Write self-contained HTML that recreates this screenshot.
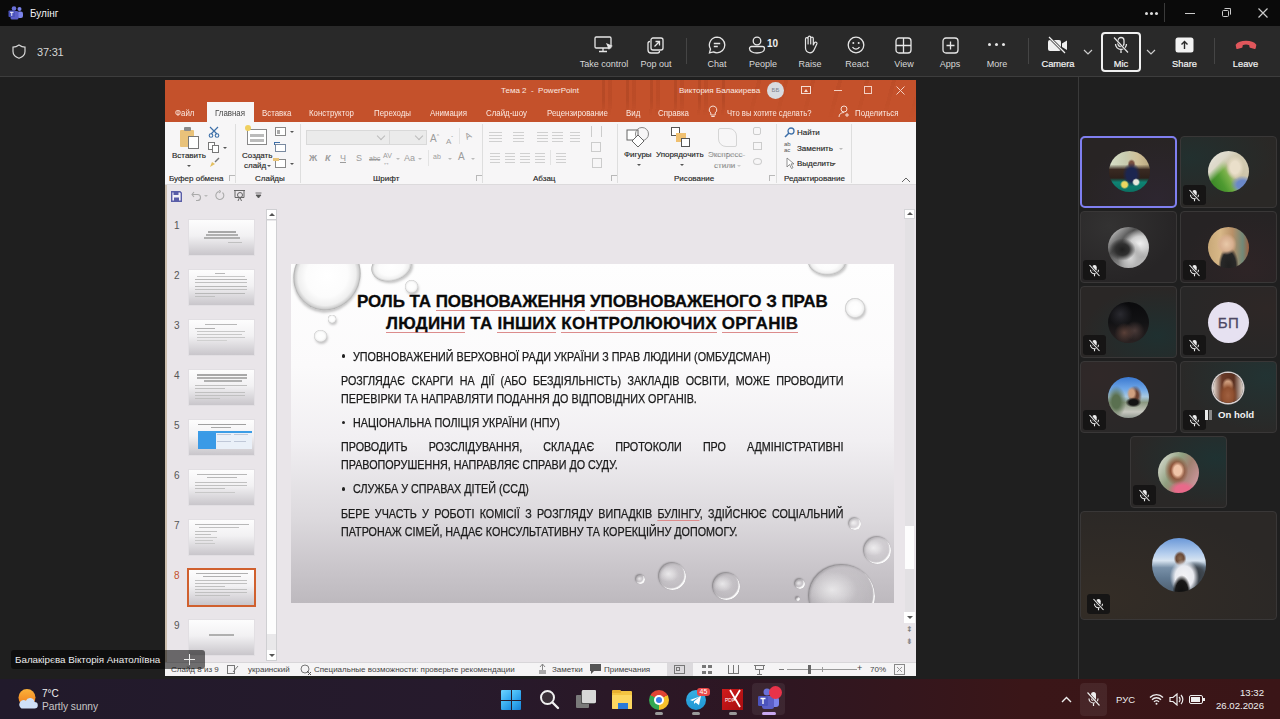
<!DOCTYPE html>
<html><head><meta charset="utf-8">
<style>
*{margin:0;padding:0;box-sizing:border-box}
html,body{width:1280px;height:719px;overflow:hidden;background:#1f1f1f;font-family:"Liberation Sans",sans-serif;-webkit-font-smoothing:antialiased}
.a{position:absolute}
.pt{font-size:8px;line-height:10px;white-space:nowrap}
.tab{top:28px;font-size:8.3px;line-height:10px;color:#fbe9e2;white-space:nowrap;transform:scaleX(.95);transform-origin:0 0}
.rl{font-size:8px;line-height:10px;color:#262626;white-space:nowrap;-webkit-text-stroke:0.15px #262626}
#titlebar{left:0;top:0;width:1280px;height:26px;background:#0a0a0a}
#toolbar{left:0;top:26px;width:1280px;height:50px;background:#292929}
#tbline{left:0;top:76px;width:1280px;height:1px;background:#3d3d3d}
#stage{left:0;top:77px;width:1280px;height:602px;background:#1f1f1f}
#ppt{left:165px;top:80px;width:751px;height:596px;background:#e9e5e9;overflow:hidden}
#vsep{left:1078px;top:77px;width:1px;height:602px;background:#3a3a3a}
#taskbar{left:0;top:679px;width:1280px;height:40px;background:linear-gradient(90deg,#211a2b 0%,#261a2c 35%,#2e1622 60%,#3a1618 80%,#3a1517 100%)}
.tri{width:0;height:0;border-left:2px solid transparent;border-right:2px solid transparent;border-top:2px solid #555}
.tri2{width:0;height:0;border-left:2px solid transparent;border-right:2px solid transparent;border-top:2px solid #bbb}
.launch{width:6px;height:6px;border-left:1px solid #aaa;border-top:1px solid #aaa;opacity:.8}
.vs{top:44px;width:1px;height:59px;background:#dedede}
.chev{width:6px;height:6px;border-right:1px solid #bbb;border-bottom:1px solid #bbb;transform:rotate(45deg)}
.dis{color:#9c9c9c;font-size:9px;line-height:10px;white-space:nowrap}
.b{font-weight:700}
.pg{height:10px;background:repeating-linear-gradient(180deg,#d0d0d0 0,#d0d0d0 1px,transparent 1px,transparent 3px)}
.thumb{width:65px;height:35px;background:linear-gradient(180deg,#fdfdfd 0%,#f2f1f3 45%,#c9c6cb 100%);box-shadow:0 0 0 1px #e2dfe3}
.thumb i{position:absolute;display:block}
.tri-up{width:0;height:0;border-left:3px solid transparent;border-right:3px solid transparent;border-bottom:3px solid #555}
.tri-dn{width:0;height:0;border-left:3px solid transparent;border-right:3px solid transparent;border-top:3px solid #555}
.st{top:585px;font-size:8px;line-height:10px;color:#444;white-space:nowrap}
.drop{border-radius:50%;background:radial-gradient(closest-side at 50% 50%,#ffffff 0%,#fcfcfc 62%,#efefef 86%,#d0d0d0 95%,#a8a8a8 100%);box-shadow:1px 2px 2.5px rgba(0,0,0,.22)}
.drop2{border-radius:50%;background:radial-gradient(ellipse 38% 30% at 35% 40%,rgba(255,255,255,.6),rgba(255,255,255,0) 100%),radial-gradient(circle at 50% 50%,rgba(255,255,255,.12) 0%,rgba(0,0,0,.04) 85%);box-shadow:-1px -1px 1.5px rgba(0,0,0,.3),inset -1.5px -1.5px 1px rgba(255,255,255,.95),inset 1px 1px 2px rgba(0,0,0,.12)}
.ttl{font-size:17px;font-weight:700;line-height:22px;color:#0a0a0a;-webkit-text-stroke:0.3px #0a0a0a;white-space:nowrap}
.ttl u,.bl u{text-decoration:none;background:linear-gradient(#dc8c8c,#dc8c8c) 0 100%/100% 1px no-repeat;padding-bottom:0}
.bl{font-size:12px;line-height:12px;color:#1a1a1a;-webkit-text-stroke:0.25px #1a1a1a;white-space:nowrap;transform:scaleX(.896);transform-origin:0 0}
.bl.j{width:560.8px;text-align:justify;text-align-last:justify}
.lb{top:59px;font-size:9px;line-height:11px;color:#d8d8d8;text-align:center;white-space:nowrap}
.lbb{top:59px;font-size:9.3px;line-height:11px;color:#f4f4f4;font-weight:400;-webkit-text-stroke:0.2px #f4f4f4;text-align:center;white-space:nowrap}
.tile{width:97px;height:72px;border:1px solid #393737;border-radius:4px;background:#2a2827}
.av{width:41px;height:41px;border-radius:50%}
.mb{width:23px;height:20px;border-radius:3px;background:#161515}
.dot{width:3.6px;height:3.6px;border-radius:50%;background:#222}
</style></head><body>
<div id="titlebar" class="a"></div>
<div id="toolbar" class="a"></div>
<div id="tbline" class="a"></div>
<div id="stage" class="a"></div>
<div id="taskbar" class="a"></div>
<div id="vsep" class="a"></div>

<!-- title bar -->
<svg class="a" style="left:8px;top:6px" width="16" height="14" viewBox="0 0 16 14">
 <circle cx="11.5" cy="3" r="2" fill="#7b83eb"/><rect x="9" y="5.5" width="6" height="6.5" rx="2" fill="#7b83eb"/>
 <circle cx="6" cy="2.5" r="2.3" fill="#6a70d8"/><rect x="2.5" y="5" width="8" height="8.5" rx="1.5" fill="#5b5fc7"/>
 <rect x="0.5" y="4.5" width="6.5" height="6.5" rx="0.8" fill="#4b53bc"/><path d="M2 6.3h3.5M3.75 6.3v3.6" stroke="#fff" stroke-width="0.9"/>
</svg>
<div class="a" style="left:30px;top:8px;font-size:10px;line-height:12px;color:#f2f2f2">Булінг</div>
<div class="a" style="left:1145px;top:12px;width:3px;height:3px;border-radius:50%;background:#ddd;box-shadow:5px 0 0 #ddd,10px 0 0 #ddd"></div>
<div class="a" style="left:1164px;top:3px;width:1px;height:19px;background:#3a3a3a"></div>
<div class="a" style="left:1185px;top:12.5px;width:10px;height:1.3px;background:#ccc"></div>
<div class="a" style="left:1222px;top:10px;width:7px;height:7px;border:1.2px solid #ccc;border-radius:1.5px"></div>
<div class="a" style="left:1224px;top:8px;width:7px;height:7px;border-top:1.2px solid #ccc;border-right:1.2px solid #ccc;border-radius:1.5px"></div>
<svg class="a" style="left:1258px;top:8px" width="10" height="10" viewBox="0 0 10 10"><path d="M0.5 0.5l9 9M9.5 0.5l-9 9" stroke="#ccc" stroke-width="1.2"/></svg>
<!-- toolbar left -->
<svg class="a" style="left:12px;top:44px" width="14" height="15" viewBox="0 0 14 15"><path d="M7 1C5 2.5 3 3.2 1 3.2v4.3c0 3.3 2.3 5.5 6 6.8 3.7-1.3 6-3.5 6-6.8V3.2C11 3.2 9 2.5 7 1z" fill="none" stroke="#d8d8d8" stroke-width="1.2"/></svg>
<div class="a" style="left:37px;top:45px;font-size:11px;line-height:14px;color:#d6d6d6;letter-spacing:-0.2px">37:31</div>
<!-- toolbar buttons -->
<svg class="a ic" style="left:594px;top:36px" width="20" height="18" viewBox="0 0 20 18"><rect x="1" y="1" width="16" height="11" rx="1.2" fill="none" stroke="#e6e6e6" stroke-width="1.3"/><path d="M9 12v3M5 15.5h8" stroke="#e6e6e6" stroke-width="1.3"/><path d="M12 7l7 3-3 1-1 3z" fill="#e6e6e6"/></svg>
<div class="a lb" style="left:579px;width:50px">Take control</div>
<svg class="a ic" style="left:647px;top:37px" width="17" height="17" viewBox="0 0 17 17"><rect x="4" y="1" width="12" height="12" rx="2" fill="none" stroke="#e6e6e6" stroke-width="1.3"/><path d="M3 4.5A2 2 0 0 0 1 6.5V13a3 3 0 0 0 3 3h6.5a2 2 0 0 0 2-2" fill="none" stroke="#e6e6e6" stroke-width="1.3"/><path d="M7.5 9.5l5-5M8.5 4.5h4v4" fill="none" stroke="#e6e6e6" stroke-width="1.3"/></svg>
<div class="a lb" style="left:639px;width:34px">Pop out</div>
<div class="a" style="left:686px;top:38px;width:1px;height:26px;background:#454545"></div>
<svg class="a ic" style="left:708px;top:36px" width="18" height="18" viewBox="0 0 18 18"><path d="M9 1.2a7.8 7.8 0 0 1 0 15.6c-1.3 0-2.5-.3-3.5-.9L1.5 16.8l1-3.8A7.8 7.8 0 0 1 9 1.2z" fill="none" stroke="#e6e6e6" stroke-width="1.3"/><path d="M5.8 7.5h6.4M5.8 10.5h4" stroke="#e6e6e6" stroke-width="1.3"/></svg>
<div class="a lb" style="left:702px;width:30px">Chat</div>
<svg class="a ic" style="left:748px;top:36px" width="18" height="18" viewBox="0 0 18 18"><circle cx="9" cy="5" r="3.8" fill="none" stroke="#e6e6e6" stroke-width="1.3"/><path d="M3.5 10.5h11a2 2 0 0 1 2 2c0 2.5-3 4.5-7.5 4.5S1.5 15 1.5 12.5a2 2 0 0 1 2-2z" fill="none" stroke="#e6e6e6" stroke-width="1.3"/></svg>
<div class="a" style="left:767px;top:38px;font-size:10px;line-height:12px;font-weight:700;color:#eee">10</div>
<div class="a lb" style="left:748px;width:30px">People</div>
<svg class="a ic" style="left:801px;top:35px" width="17" height="19" viewBox="0 0 17 19"><path d="M4.5 11V4a1.3 1.3 0 0 1 2.6 0v5V2.5a1.3 1.3 0 0 1 2.6 0V9V3.5a1.3 1.3 0 0 1 2.6 0V10l1.2-2.2a1.3 1.3 0 0 1 2.3 1.2l-2.8 6A4.5 4.5 0 0 1 9 17.8 5 5 0 0 1 4.5 13z" fill="none" stroke="#e6e6e6" stroke-width="1.2" stroke-linejoin="round"/></svg>
<div class="a lb" style="left:795px;width:30px">Raise</div>
<svg class="a ic" style="left:847px;top:36px" width="18" height="18" viewBox="0 0 18 18"><circle cx="9" cy="9" r="7.8" fill="none" stroke="#e6e6e6" stroke-width="1.3"/><circle cx="6.3" cy="7" r="1" fill="#e6e6e6"/><circle cx="11.7" cy="7" r="1" fill="#e6e6e6"/><path d="M5.5 11a4 4 0 0 0 7 0" fill="none" stroke="#e6e6e6" stroke-width="1.3"/></svg>
<div class="a lb" style="left:842px;width:30px">React</div>
<svg class="a ic" style="left:895px;top:37px" width="17" height="17" viewBox="0 0 17 17"><rect x="1" y="1" width="15" height="15" rx="3" fill="none" stroke="#e6e6e6" stroke-width="1.3"/><path d="M8.5 1v15M1 8.5h15" stroke="#e6e6e6" stroke-width="1.3"/></svg>
<div class="a lb" style="left:889px;width:30px">View</div>
<svg class="a ic" style="left:942px;top:37px" width="17" height="17" viewBox="0 0 17 17"><rect x="1" y="1" width="15" height="15" rx="3" fill="none" stroke="#e6e6e6" stroke-width="1.3"/><path d="M8.5 4.5v8M4.5 8.5h8" stroke="#e6e6e6" stroke-width="1.3"/></svg>
<div class="a lb" style="left:935px;width:30px">Apps</div>
<div class="a" style="left:988px;top:43px;width:3px;height:3px;border-radius:50%;background:#e6e6e6;box-shadow:7px 0 0 #e6e6e6,14px 0 0 #e6e6e6"></div>
<div class="a lb" style="left:982px;width:30px">More</div>
<div class="a" style="left:1028px;top:38px;width:1px;height:26px;background:#454545"></div>
<svg class="a ic" style="left:1047px;top:36px" width="22" height="18" viewBox="0 0 22 18"><rect x="1" y="4" width="13" height="11" rx="2" fill="#f0f0f0"/><path d="M15 7.5l5-3v9.5l-5-3z" fill="#f0f0f0"/><path d="M2 1l16 16" stroke="#292929" stroke-width="2.6"/><path d="M2 1l16 16" stroke="#f0f0f0" stroke-width="1.2"/></svg>
<div class="a lbb" style="left:1038px;width:40px">Camera</div>
<svg class="a" style="left:1083px;top:49px" width="10" height="6" viewBox="0 0 10 6"><path d="M1 1l4 4 4-4" fill="none" stroke="#ccc" stroke-width="1.2"/></svg>
<div class="a" style="left:1101px;top:32px;width:40px;height:40px;border:2px solid #f0f0f0;border-radius:4px"></div>
<svg class="a ic" style="left:1112px;top:36px" width="18" height="18" viewBox="0 0 18 18"><rect x="6" y="1.5" width="6" height="9" rx="3" fill="none" stroke="#e6e6e6" stroke-width="1.3"/><path d="M3.5 8a5.5 5.5 0 0 0 11 0M9 13.5V17" fill="none" stroke="#e6e6e6" stroke-width="1.3"/><path d="M2 1.5l14 15" stroke="#292929" stroke-width="2.4"/><path d="M2 1.5l14 15" stroke="#e6e6e6" stroke-width="1.2"/></svg>
<div class="a lbb" style="left:1106px;width:30px">Mic</div>
<svg class="a" style="left:1146px;top:49px" width="10" height="6" viewBox="0 0 10 6"><path d="M1 1l4 4 4-4" fill="none" stroke="#ccc" stroke-width="1.2"/></svg>
<svg class="a ic" style="left:1175px;top:37px" width="19" height="16" viewBox="0 0 19 16"><rect x="0.5" y="0.5" width="18" height="15" rx="2.5" fill="#f2f2f2"/><path d="M9.5 12V4.5M6.5 7.5l3-3 3 3" fill="none" stroke="#292929" stroke-width="1.4"/></svg>
<div class="a lbb" style="left:1169px;width:31px">Share</div>
<div class="a" style="left:1214px;top:38px;width:1px;height:26px;background:#454545"></div>
<svg class="a ic" style="left:1235px;top:39px" width="22" height="11" viewBox="0 0 22 11"><path d="M1.5 6C5 1.5 17 1.5 20.5 6l-.6 3.2-4.6-1.2-.4-2.6C13 4.6 9 4.6 7.1 5.4l-.4 2.6-4.6 1.2z" fill="#e0575c" stroke="#e0575c" stroke-width="1.6" stroke-linejoin="round"/></svg>
<div class="a lbb" style="left:1230px;width:31px">Leave</div>
<!-- name label overlay -->

<div id="ppt" class="a">
 <!-- title + tabs orange -->
 <div class="a" style="left:0;top:0;width:751px;height:42px;background:#c4512b"></div>
 <div class="a" style="left:430px;top:0;width:130px;height:42px;background:repeating-linear-gradient(91deg,rgba(110,35,12,0) 0 7px,rgba(110,35,12,.16) 7px 10px,rgba(110,35,12,0) 10px 13px,rgba(110,35,12,.1) 13px 17px,rgba(110,35,12,0) 17px 24px);-webkit-mask-image:linear-gradient(180deg,#000 0%,#000 45%,transparent 85%)"></div>
 <div class="a" style="left:580px;top:0;width:170px;height:42px;background:repeating-linear-gradient(105deg,rgba(110,35,12,0) 0 12px,rgba(110,35,12,.08) 12px 16px,rgba(110,35,12,0) 16px 26px);-webkit-mask-image:linear-gradient(180deg,#000 0%,transparent 90%)"></div>
 <div class="a pt" style="left:336px;top:6px;color:#fbe9e2">Тема 2 &nbsp;- &nbsp;PowerPoint</div>
 <div class="a pt" style="left:514px;top:6px;color:#fbe9e2">Виктория Балакирева</div>
 <div class="a" style="left:602px;top:2px;width:17px;height:17px;border-radius:50%;background:#d8dbe0;color:#7a7f8c;font-size:6px;line-height:17px;text-align:center">ББ</div>
 <div class="a" style="left:636px;top:6px;width:10px;height:8px;border:1px solid #f6ddd3"></div>
 <div class="a" style="left:639px;top:9px;width:0;height:0;border-left:2px solid transparent;border-right:2px solid transparent;border-bottom:3px solid #f6ddd3"></div>
 <div class="a" style="left:669px;top:10px;width:8px;height:1px;background:#f3d0c3"></div>
 <div class="a" style="left:699px;top:6px;width:8px;height:8px;border:1px solid #f3d0c3"></div>
 <svg class="a" style="left:731px;top:6px" width="9" height="9" viewBox="0 0 9 9"><path d="M.5.5l8 8M8.5.5l-8 8" stroke="#f3d0c3" stroke-width="1"/></svg>
 <div class="a" style="left:42px;top:22px;width:47px;height:20px;background:#f7f6f7"></div>
 <div class="a tab" style="left:10px">Файл</div>
 <div class="a tab" style="left:50px;color:#444">Главная</div>
 <div class="a tab" style="left:97px">Вставка</div>
 <div class="a tab" style="left:144px">Конструктор</div>
 <div class="a tab" style="left:209px">Переходы</div>
 <div class="a tab" style="left:265px">Анимация</div>
 <div class="a tab" style="left:321px">Слайд-шоу</div>
 <div class="a tab" style="left:382px">Рецензирование</div>
 <div class="a tab" style="left:461px">Вид</div>
 <div class="a tab" style="left:493px">Справка</div>
 <svg class="a" style="left:543px;top:25px" width="10" height="13" viewBox="0 0 10 13"><path d="M5 1a3.8 3.8 0 0 0-2.2 6.9v2.1h4.4V7.9A3.8 3.8 0 0 0 5 1zM3.3 11.5h3.4" fill="none" stroke="#f6ddd3" stroke-width="1"/></svg>
 <div class="a tab" style="left:562px;transform:scaleX(.92)">Что вы хотите сделать?</div>
 <svg class="a" style="left:673px;top:25px" width="13" height="13" viewBox="0 0 13 13"><circle cx="6" cy="4" r="3" fill="none" stroke="#f6ddd3"/><path d="M1 12c0-3 2.2-4.5 5-4.5M9 8v4M7 10h4" fill="none" stroke="#f6ddd3"/></svg>
 <div class="a tab" style="left:690px">Поделиться</div>

 <!-- ribbon -->
 <div id="ribbon" class="a" style="left:0;top:42px;width:751px;height:63px;background:#f7f6f7"></div>
 <div class="a" style="left:0;top:104px;width:751px;height:1px;background:#dcdadc"></div>

 <!-- Clipboard group -->
 <div class="a" style="left:15px;top:50px;width:14px;height:17px;background:#e9c27a;border-radius:1px"></div>
 <div class="a" style="left:19px;top:47px;width:7px;height:4px;background:#8a8a8a;border-radius:1px"></div>
 <div class="a" style="left:23px;top:56px;width:11px;height:13px;background:#fff;border:1px solid #777"></div>
 <div class="a rl" style="left:7px;top:71px">Вставить</div>
 <div class="a tri" style="left:22px;top:85px"></div>
 <svg class="a" style="left:43px;top:46px" width="12" height="12" viewBox="0 0 12 12"><path d="M2 1l7 7M10 1L3 8" stroke="#3d6fa8" stroke-width="1.2" fill="none"/><circle cx="3" cy="9.5" r="1.8" fill="none" stroke="#3d6fa8" stroke-width="1.1"/><circle cx="9" cy="9.5" r="1.8" fill="none" stroke="#3d6fa8" stroke-width="1.1"/></svg>
 <svg class="a" style="left:43px;top:62px" width="12" height="11" viewBox="0 0 12 11"><rect x="0.5" y="0.5" width="6" height="7" fill="#fff" stroke="#777"/><rect x="4.5" y="3.5" width="6" height="7" fill="#fff" stroke="#777"/></svg>
 <div class="a tri" style="left:58px;top:67px"></div>
 <svg class="a" style="left:44px;top:77px" width="11" height="11" viewBox="0 0 11 11"><path d="M6 5l4-4" stroke="#777" stroke-width="1.5"/><path d="M1 10l2-5 3 2z" fill="#e4c060"/></svg>
 <div class="a rl" style="left:4px;top:94px">Буфер обмена</div>
 <div class="a launch" style="left:64px;top:95px"></div>
 <div class="a vs" style="left:70px"></div>
 <!-- Slides group -->
 <div class="a" style="left:82px;top:49px;width:20px;height:16px;background:#fff;border:1px solid #888"></div>
 <div class="a" style="left:85px;top:54px;width:14px;height:3px;background:#bbb"></div>
 <div class="a" style="left:85px;top:59px;width:14px;height:3px;background:#bbb"></div>
 <div class="a" style="left:80px;top:45px;width:6px;height:6px;background:#f0d060;border-radius:50%"></div>
 <div class="a rl" style="left:77px;top:71px">Создать</div>
 <div class="a rl" style="left:79px;top:81px">слайд</div>
 <div class="a tri" style="left:102px;top:85px"></div>
 <div class="a" style="left:110px;top:47px;width:11px;height:9px;border:1px solid #888;background:#fff"></div>
 <div class="a" style="left:112px;top:50px;width:3px;height:4px;background:#aaa"></div>
 <div class="a tri" style="left:125px;top:51px"></div>
 <div class="a" style="left:110px;top:64px;width:11px;height:8px;border:1px solid #7a8aa0;background:#fff"></div>
 <div class="a" style="left:109px;top:62px;width:6px;height:3px;border-top:1.5px solid #3d6fa8;border-left:1.5px solid #3d6fa8"></div>
 <div class="a" style="left:110px;top:79px;width:11px;height:9px;border:1px solid #888;background:#fff"></div>
 <div class="a" style="left:108px;top:78px;width:6px;height:3px;background:#e8c47a"></div>
 <div class="a tri" style="left:125px;top:83px"></div>
 <div class="a rl" style="left:90px;top:94px">Слайды</div>
 <div class="a vs" style="left:135px"></div>
 <!-- Font group -->
 <div class="a" style="left:141px;top:50px;width:84px;height:15px;background:#ebebeb;border:1px solid #d9d9d9"></div>
 <div class="a" style="left:224px;top:50px;width:38px;height:15px;background:#ebebeb;border:1px solid #d9d9d9"></div>
 <div class="a chev" style="left:213px;top:53px"></div>
 <div class="a chev" style="left:251px;top:53px"></div>
 <div class="a dis" style="left:265px;top:51px;font-size:10px">A<sup style="font-size:5px">^</sup></div>
 <div class="a dis" style="left:281px;top:53px;font-size:8px">A<sup style="font-size:5px">ˇ</sup></div>
 <div class="a" style="left:294px;top:48px;width:1px;height:16px;background:#e3e3e3"></div>
 <div class="a dis" style="left:300px;top:51px;font-size:9px;transform:rotate(-30deg)">A</div>
 <div class="a dis b" style="left:144px;top:73px">Ж</div>
 <div class="a dis b" style="left:160px;top:73px;font-style:italic">К</div>
 <div class="a dis" style="left:175px;top:73px;text-decoration:underline">Ч</div>
 <div class="a dis" style="left:191px;top:73px">S</div>
 <div class="a dis" style="left:204px;top:74px;font-size:7px;text-decoration:line-through">abc</div>
 <div class="a dis" style="left:218px;top:72px;font-size:7px;line-height:7px">AV<br>↔</div>
 <div class="a tri2" style="left:231px;top:78px"></div>
 <div class="a dis" style="left:239px;top:73px">Aa</div>
 <div class="a tri2" style="left:253px;top:78px"></div>
 <div class="a" style="left:263px;top:70px;width:1px;height:16px;background:#e3e3e3"></div>
 <div class="a dis" style="left:268px;top:72px;font-size:7px">ab</div>
 <div class="a tri2" style="left:283px;top:78px"></div>
 <div class="a dis" style="left:293px;top:72px;font-size:10px">A</div>
 <div class="a tri2" style="left:306px;top:78px"></div>
 <div class="a rl" style="left:208px;top:94px">Шрифт</div>
 <div class="a launch" style="left:311px;top:95px"></div>
 <div class="a vs" style="left:317px"></div>
 <!-- Paragraph group (disabled) -->
 <div class="a pg" style="left:324px;top:52px;width:13px"></div>
 <div class="a pg" style="left:348px;top:52px;width:11px"></div>
 <div class="a pg" style="left:372px;top:52px;width:11px"></div>
 <div class="a pg" style="left:387px;top:52px;width:11px"></div>
 <div class="a pg" style="left:405px;top:52px;width:10px"></div>
 <div class="a pg" style="left:325px;top:73px;width:10px"></div>
 <div class="a pg" style="left:340px;top:73px;width:10px"></div>
 <div class="a pg" style="left:355px;top:73px;width:10px"></div>
 <div class="a pg" style="left:370px;top:73px;width:10px"></div>
 <div class="a" style="left:385px;top:70px;width:1px;height:15px;background:#e3e3e3"></div>
 <div class="a pg" style="left:391px;top:73px;width:10px"></div>
 <div class="a" style="left:426px;top:46px;width:11px;height:11px;border-left:1px solid #ccc;border-right:1px solid #ccc"></div>
 <div class="a" style="left:426px;top:62px;width:10px;height:10px;border:1px solid #ccc"></div>
 <div class="a" style="left:427px;top:78px;width:10px;height:10px;border:1px solid #ccc"></div>
 <div class="a rl" style="left:368px;top:94px">Абзац</div>
 <div class="a launch" style="left:446px;top:95px"></div>
 <div class="a vs" style="left:452px"></div>
 <!-- Drawing group -->
 <svg class="a" style="left:461px;top:46px" width="24" height="22" viewBox="0 0 24 22"><rect x="1" y="4" width="11" height="10" fill="#fff" stroke="#666"/><circle cx="16" cy="8" r="6.5" fill="none" stroke="#888"/><path d="M12 9l6 6-6 6-6-6z" fill="#fff" stroke="#666"/></svg>
 <div class="a rl" style="left:459px;top:70px">Фигуры</div>
 <div class="a tri" style="left:472px;top:84px"></div>
 <div class="a" style="left:506px;top:47px;width:9px;height:9px;background:#fff;border:1px solid #555"></div>
 <div class="a" style="left:511px;top:53px;width:10px;height:9px;background:#f0c070"></div>
 <div class="a" style="left:516px;top:58px;width:9px;height:9px;background:#fff;border:1px solid #555"></div>
 <div class="a rl" style="left:491px;top:70px">Упорядочить</div>
 <div class="a tri" style="left:515px;top:84px"></div>
 <div class="a" style="left:553px;top:48px;width:19px;height:19px;border:1px solid #d5d5d5;border-radius:2px 8px 2px 8px"></div>
 <div class="a rl" style="left:543px;top:70px;color:#c0c0c0">Экспресс-</div>
 <div class="a rl" style="left:549px;top:81px;color:#c0c0c0">стили</div>
 <div class="a tri2" style="left:572px;top:85px;border-top-color:#ccc"></div>
 <div class="a" style="left:588px;top:47px;width:8px;height:8px;border:1px solid #ccc;border-radius:2px"></div>
 <div class="a" style="left:588px;top:62px;width:9px;height:8px;border:1px solid #ccc"></div>
 <div class="a" style="left:588px;top:78px;width:9px;height:7px;border:1px solid #ccc;border-radius:50%"></div>
 <div class="a rl" style="left:509px;top:94px">Рисование</div>
 <div class="a launch" style="left:604px;top:95px"></div>
 <div class="a vs" style="left:611px"></div>
 <!-- Editing group -->
 <svg class="a" style="left:619px;top:47px" width="11" height="11" viewBox="0 0 11 11"><circle cx="7" cy="4" r="3" fill="none" stroke="#3d6fa8" stroke-width="1.3"/><path d="M5 6l-4 4" stroke="#3d6fa8" stroke-width="1.6"/></svg>
 <div class="a rl" style="left:632px;top:48px">Найти</div>
 <div class="a" style="left:619px;top:61px;font-size:6px;line-height:6px;color:#555">ab<br>ac</div>
 <div class="a rl" style="left:632px;top:64px">Заменить</div>
 <div class="a tri2" style="left:674px;top:68px"></div>
 <svg class="a" style="left:621px;top:77px" width="9" height="12" viewBox="0 0 9 12"><path d="M1 1v9l2.5-2.5 2 4 1.5-.8-2-3.8H8z" fill="#fff" stroke="#777" stroke-width="0.8"/></svg>
 <div class="a rl" style="left:632px;top:79px">Выделить</div>
 <div class="a tri" style="left:667px;top:83px"></div>
 <div class="a rl" style="left:619px;top:94px">Редактирование</div>
 <div class="a vs" style="left:686px"></div>
 <svg class="a" style="left:736px;top:97px" width="10" height="6" viewBox="0 0 10 6"><path d="M1 5l4-4 4 4" fill="none" stroke="#666"/></svg>
 <!-- QAT -->
 <svg class="a" style="left:6px;top:111px" width="11" height="11" viewBox="0 0 11 11"><path d="M0.7 0.7h8.3l1.3 1.3v8.3H0.7z" fill="#f4f2f8" stroke="#5a5ea8" stroke-width="1.4"/><rect x="2.5" y="1" width="5" height="3" fill="#5a5ea8"/><rect x="3" y="6.5" width="5" height="3.5" fill="#5a5ea8"/></svg>
 <svg class="a" style="left:26px;top:111px" width="11" height="10" viewBox="0 0 11 10"><path d="M3 1L1 3.5 3 6M1 3.5h5.5a3 3 0 0 1 0 6H5" fill="none" stroke="#aaa" stroke-width="1.1"/></svg>
 <div class="a tri2" style="left:39px;top:115px;border-top-color:#bbb"></div>
 <svg class="a" style="left:49px;top:110px" width="11" height="11" viewBox="0 0 11 11"><path d="M8.5 2.5A4 4 0 1 1 5.5 1.5" fill="none" stroke="#aaa" stroke-width="1.1"/><path d="M5 0l2 1.5-2 1.5" fill="none" stroke="#aaa"/></svg>
 <svg class="a" style="left:68px;top:109px" width="13" height="13" viewBox="0 0 13 13"><path d="M1 1.5h11" stroke="#666"/><path d="M2 1.5v7h9v-7" fill="none" stroke="#666"/><circle cx="7" cy="6" r="2.5" fill="none" stroke="#666"/><path d="M5 12l1.5-3.5M8.5 12L7 8.5" stroke="#666"/></svg>
 <svg class="a" style="left:90px;top:112px" width="7" height="7" viewBox="0 0 7 7"><path d="M0.5 1h6M1 3l2.5 3 2.5-3z" fill="#555" stroke="#555" stroke-width="0.8"/></svg>

 <!-- left thumbnails panel -->
 <div class="a" style="left:0;top:105px;width:2px;height:477px;background:#cdbfae"></div>
 <div class="a" style="left:9px;top:140px;font-size:10px;line-height:12px;color:#555">1</div>
 <div class="a thumb" style="left:24px;top:140px"><i style="left:19px;top:11px;width:28px;height:1.5px;background:#a8a8a8"></i><i style="left:17px;top:14px;width:32px;height:1.5px;background:#b0b0b0"></i><i style="left:15px;top:17px;width:36px;height:1.5px;background:#b0b0b0"></i><i style="left:39px;top:22px;width:14px;height:1px;background:#c0c0c0"></i></div>
 <div class="a" style="left:9px;top:190px;font-size:10px;line-height:12px;color:#555">2</div>
 <div class="a thumb" style="left:24px;top:190px"><i style="left:26px;top:3px;width:10px;height:1px;background:#b8b8b8"></i><i style="left:8px;top:6px;width:48px;height:1px;background:#c8c8c8"></i><i style="left:6px;top:9px;width:52px;height:1.2px;background:#b8b8b8"></i><i style="left:6px;top:12px;width:52px;height:1px;background:#c0c0c0"></i><i style="left:6px;top:16px;width:52px;height:1.2px;background:#b8b8b8"></i><i style="left:6px;top:19px;width:52px;height:1px;background:#c0c0c0"></i><i style="left:6px;top:23px;width:50px;height:1.2px;background:#b8b8b8"></i><i style="left:6px;top:26px;width:20px;height:1px;background:#c0c0c0"></i></div>
 <div class="a" style="left:9px;top:240px;font-size:10px;line-height:12px;color:#555">3</div>
 <div class="a thumb" style="left:24px;top:240px"><i style="left:16px;top:4px;width:32px;height:1px;background:#b8b8b8"></i><i style="left:6px;top:8px;width:20px;height:1.2px;background:#b0b0b0"></i><i style="left:8px;top:11px;width:48px;height:1px;background:#c8c8c8"></i><i style="left:8px;top:14px;width:45px;height:1px;background:#c8c8c8"></i><i style="left:8px;top:17px;width:48px;height:1px;background:#c8c8c8"></i><i style="left:8px;top:20px;width:30px;height:1px;background:#d0d0d0"></i></div>
 <div class="a" style="left:9px;top:290px;font-size:10px;line-height:12px;color:#555">4</div>
 <div class="a thumb" style="left:24px;top:290px"><i style="left:8px;top:4px;width:50px;height:1.5px;background:#a8a8a8"></i><i style="left:8px;top:7px;width:50px;height:1.5px;background:#b0b0b0"></i><i style="left:15px;top:10px;width:38px;height:1.5px;background:#b0b0b0"></i><i style="left:6px;top:15px;width:52px;height:1px;background:#c0c0c0"></i><i style="left:6px;top:18px;width:30px;height:1px;background:#c0c0c0"></i><i style="left:6px;top:22px;width:50px;height:1px;background:#c0c0c0"></i><i style="left:6px;top:25px;width:50px;height:1px;background:#c0c0c0"></i><i style="left:6px;top:28px;width:25px;height:1px;background:#c0c0c0"></i></div>
 <div class="a" style="left:9px;top:340px;font-size:10px;line-height:12px;color:#555">5</div>
 <div class="a thumb" style="left:24px;top:340px"><i style="left:9px;top:4px;width:48px;height:1.3px;background:#a0a0a0"></i><i style="left:22px;top:6.5px;width:20px;height:1.2px;background:#a8a8a8"></i><i style="left:9px;top:10.5px;width:54px;height:2px;background:#3c9de6"></i><i style="left:9px;top:12.5px;width:18px;height:16px;background:#3a9ae6"></i><i style="left:27px;top:12.5px;width:36px;height:16px;background:#eaf0f8"></i><i style="left:28px;top:14px;width:14px;height:0.8px;background:#c0c8d8"></i><i style="left:45px;top:14px;width:14px;height:0.8px;background:#c0c8d8"></i><i style="left:28px;top:21px;width:14px;height:0.8px;background:#c0c8d8"></i><i style="left:45px;top:21px;width:12px;height:0.8px;background:#c0c8d8"></i></div>
 <div class="a" style="left:9px;top:390px;font-size:10px;line-height:12px;color:#555">6</div>
 <div class="a thumb" style="left:24px;top:390px"><i style="left:8px;top:4px;width:50px;height:1.2px;background:#b8b8b8"></i><i style="left:18px;top:7px;width:30px;height:1.2px;background:#b8b8b8"></i><i style="left:6px;top:12px;width:52px;height:1px;background:#c0c0c0"></i><i style="left:6px;top:15px;width:52px;height:1px;background:#c0c0c0"></i><i style="left:6px;top:18px;width:30px;height:1px;background:#c0c0c0"></i><i style="left:6px;top:22px;width:40px;height:1px;background:#c8c8c8"></i></div>
 <div class="a" style="left:9px;top:440px;font-size:10px;line-height:12px;color:#555">7</div>
 <div class="a thumb" style="left:24px;top:440px"><i style="left:6px;top:4px;width:54px;height:1.2px;background:#b8b8b8"></i><i style="left:10px;top:7px;width:40px;height:1px;background:#c0c0c0"></i><i style="left:6px;top:11px;width:22px;height:1px;background:#c0c0c0"></i><i style="left:6px;top:14px;width:16px;height:1px;background:#c0c0c0"></i><i style="left:6px;top:17px;width:22px;height:1px;background:#c8c8c8"></i><i style="left:6px;top:20px;width:18px;height:1px;background:#c8c8c8"></i><i style="left:6px;top:23px;width:20px;height:1px;background:#c8c8c8"></i></div>
 <div class="a" style="left:9px;top:490px;font-size:10px;line-height:12px;color:#c4512b">8</div>
 <div class="a thumb" style="left:24px;top:490px"><i style="left:7px;top:3px;width:52px;height:1.2px;background:#b0b0b0"></i><i style="left:14px;top:6px;width:38px;height:1.2px;background:#b0b0b0"></i><i style="left:6px;top:10px;width:52px;height:1px;background:#c0c0c0"></i><i style="left:6px;top:13px;width:52px;height:1px;background:#c0c0c0"></i><i style="left:6px;top:16px;width:30px;height:1px;background:#c0c0c0"></i><i style="left:6px;top:19px;width:52px;height:1px;background:#c0c0c0"></i><i style="left:6px;top:22px;width:52px;height:1px;background:#c0c0c0"></i><i style="left:6px;top:25px;width:35px;height:1px;background:#c0c0c0"></i></div>
 <div class="a" style="left:22px;top:488px;width:69px;height:39px;border:2px solid #d0602e"></div>
 <div class="a" style="left:9px;top:540px;font-size:10px;line-height:12px;color:#555">9</div>
 <div class="a thumb" style="left:24px;top:540px"><i style="left:20px;top:14px;width:25px;height:1.5px;background:#b0b0b0"></i></div>

 <div class="a" style="left:101px;top:129px;width:11px;height:452px;background:#e9e8ea;border:1px solid #cfcfd2"></div>
 <div class="a" style="left:102px;top:130px;width:9px;height:10px;background:#fff;border-bottom:1px solid #cfcfd2"></div>
 <div class="a tri-up" style="left:104px;top:133px"></div>
 <div class="a" style="left:102px;top:141px;width:9px;height:413px;background:#fdfdfd"></div>
 <div class="a" style="left:102px;top:570px;width:9px;height:10px;background:#fff"></div>
 <div class="a tri-dn" style="left:104px;top:574px"></div>
 <!-- right scrollbar -->
 <div class="a" style="left:739px;top:129px;width:11px;height:10px;background:#fff;border:1px solid #d5d5d8"></div>
 <div class="a tri-up" style="left:742px;top:132px"></div>
 <div class="a" style="left:740px;top:139px;width:9px;height:393px;background:#e3e1e4"></div>
 <div class="a" style="left:740px;top:446px;width:9px;height:43px;background:#fdfdfd"></div>
 <div class="a" style="left:739px;top:532px;width:11px;height:11px;background:#fff"></div>
 <div class="a tri-dn" style="left:742px;top:536px"></div>
 <div class="a" style="left:741px;top:546px;font-size:8px;line-height:8px;color:#777">⇞</div>
 <div class="a" style="left:741px;top:558px;font-size:8px;line-height:8px;color:#777">⇟</div>
 <!-- status bar -->
 <div class="a" style="left:0;top:582px;width:751px;height:1px;background:#d8d6d9"></div>
 <div class="a" style="left:0;top:583px;width:751px;height:13px;background:#f5f4f5"></div>
 <div class="a st" style="left:6px">Слайд 8 из 9</div>
 <svg class="a" style="left:62px;top:584px" width="13" height="11" viewBox="0 0 13 11"><rect x="0.5" y="1.5" width="7" height="8" fill="none" stroke="#777"/><path d="M6 8l5-6" stroke="#777"/></svg>
 <div class="a st" style="left:83px">украинский</div>
 <svg class="a" style="left:135px;top:584px" width="12" height="12" viewBox="0 0 12 12"><circle cx="5" cy="5" r="4" fill="none" stroke="#777"/><path d="M7 7l4 4M8 11l3-3" stroke="#555"/></svg>
 <div class="a st" style="left:149px">Специальные возможности: проверьте рекомендации</div>
 <svg class="a" style="left:373px;top:584px" width="9" height="11" viewBox="0 0 9 11"><path d="M4.5 0v6M2 3l2.5-3 2.5 3" fill="none" stroke="#888"/><rect x="1" y="6" width="7" height="4" fill="#aaa"/></svg>
 <div class="a st" style="left:387px">Заметки</div>
 <svg class="a" style="left:425px;top:584px" width="11" height="10" viewBox="0 0 11 10"><path d="M0 0h11v7H4L1 10V7H0z" fill="#555"/></svg>
 <div class="a st" style="left:439px">Примечания</div>
 <div class="a" style="left:502px;top:583px;width:26px;height:13px;background:#dcdadd"></div>
 <div class="a" style="left:509px;top:585px;width:11px;height:9px;border:1px solid #777"></div>
 <div class="a" style="left:511px;top:587px;width:4px;height:4px;border:1px solid #777"></div>
 <div class="a" style="left:537px;top:585px;width:11px;height:10px;background:linear-gradient(#777,#777) 0 0/4px 3px no-repeat,linear-gradient(#777,#777) 6px 0/4px 3px no-repeat,linear-gradient(#777,#777) 0 6px/4px 3px no-repeat,linear-gradient(#777,#777) 6px 6px/4px 3px no-repeat"></div>
 <div class="a" style="left:563px;top:585px;width:11px;height:9px;border:1px solid #777;border-top:none"></div>
 <div class="a" style="left:568px;top:585px;width:1px;height:9px;background:#777"></div>
 <svg class="a" style="left:589px;top:584px" width="11" height="11" viewBox="0 0 11 11"><path d="M0 1.5h11M1.5 1.5v4h8v-4M5.5 5.5v5M3 10.5h5" fill="none" stroke="#777"/></svg>
 <div class="a" style="left:614px;top:589px;width:5px;height:1px;background:#777"></div>
 <div class="a" style="left:622px;top:589px;width:70px;height:1px;background:#999"></div>
 <div class="a" style="left:643px;top:585px;width:3px;height:9px;background:#666"></div>
 <div class="a" style="left:657px;top:587px;width:1px;height:5px;background:#999"></div>
 <div class="a st" style="left:692px;top:583px;font-size:9px">+</div>
 <div class="a st" style="left:705px">70%</div>
 <svg class="a" style="left:729px;top:584px" width="11" height="11" viewBox="0 0 11 11"><rect x="0.5" y="0.5" width="10" height="10" fill="none" stroke="#888"/><path d="M3 3l5 5M8 3L3 8" stroke="#999"/></svg>

</div>

<div id="slide" class="a" style="left:291px;top:264px;width:603px;height:339px;overflow:hidden;background:linear-gradient(180deg,#fefefe 0%,#fbfafb 30%,#f1eff2 52%,#dcd9dd 75%,#c9c5ca 90%,#bdb9be 100%)">
 <!-- drops top-left -->
 <div class="a drop" style="left:3px;top:-24px;width:66px;height:71px;transform:rotate(30deg)"></div>
 <div class="a drop" style="left:80px;top:-12px;width:41px;height:29px;transform:rotate(-15deg)"></div>
 <div class="a drop" style="left:114px;top:16px;width:13px;height:13px"></div>
 <div class="a drop" style="left:37px;top:51px;width:8px;height:8px"></div>
 <div class="a drop" style="left:23px;top:66px;width:13px;height:12px"></div>
 <!-- drops top-right -->
 <div class="a drop" style="left:517px;top:-16px;width:38px;height:27px"></div>
 <div class="a drop" style="left:554px;top:34px;width:20px;height:20px"></div>
 <!-- drops bottom -->
 <div class="a drop2" style="left:558px;top:254px;width:12px;height:12px"></div>
 <div class="a drop2" style="left:573px;top:273px;width:27px;height:27px"></div>
 <div class="a drop2" style="left:518px;top:301px;width:66px;height:62px"></div>
 <div class="a drop2" style="left:504px;top:315px;width:10px;height:10px"></div>
 <div class="a drop2" style="left:505px;top:333px;width:4px;height:4px"></div>
 <div class="a drop2" style="left:422px;top:309px;width:27px;height:27px"></div>
 <div class="a drop2" style="left:368px;top:299px;width:27px;height:27px"></div>
 <div class="a drop2" style="left:345px;top:311px;width:9px;height:9px"></div>
 <!-- title -->
 <div class="a ttl" style="left:66px;top:27px;letter-spacing:-0.06px">РОЛЬ ТА <u>ПОВНОВАЖЕННЯ</u> <u>УПОВНОВАЖЕНОГО</u> З ПРАВ</div>
 <div class="a ttl" style="left:95px;top:49px;letter-spacing:0.25px"><u>ЛЮДИНИ</u> ТА <u>ІНШИХ</u> <u>КОНТРОЛЮЮЧИХ</u> <u>ОРГАНІВ</u></div>
 <!-- body -->
 <div class="a dot" style="left:50.5px;top:90.3px"></div>
 <div class="a bl" style="left:62px;top:86.5px">УПОВНОВАЖЕНИЙ ВЕРХОВНОЇ РАДИ УКРАЇНИ З ПРАВ ЛЮДИНИ (ОМБУДСМАН)</div>
 <div class="a bl j" style="left:50px;top:111.2px">РОЗГЛЯДАЄ СКАРГИ НА ДІЇ (АБО БЕЗДІЯЛЬНІСТЬ) ЗАКЛАДІВ ОСВІТИ, МОЖЕ ПРОВОДИТИ</div>
 <div class="a bl" style="left:50px;top:129.2px">ПЕРЕВІРКИ ТА НАПРАВЛЯТИ ПОДАННЯ ДО ВІДПОВІДНИХ ОРГАНІВ.</div>
 <div class="a dot" style="left:50.5px;top:156.5px"></div>
 <div class="a bl" style="left:62px;top:152.7px">НАЦІОНАЛЬНА ПОЛІЦІЯ УКРАЇНИ (НПУ)</div>
 <div class="a bl j" style="left:50px;top:177.2px">ПРОВОДИТЬ РОЗСЛІДУВАННЯ, СКЛАДАЄ ПРОТОКОЛИ ПРО АДМІНІСТРАТИВНІ</div>
 <div class="a bl" style="left:50px;top:194.9px">ПРАВОПОРУШЕННЯ, НАПРАВЛЯЄ СПРАВИ ДО СУДУ.</div>
 <div class="a dot" style="left:50.5px;top:223px"></div>
 <div class="a bl" style="left:62px;top:219.2px">СЛУЖБА У СПРАВАХ ДІТЕЙ (ССД)</div>
 <div class="a bl j" style="left:50px;top:243.8px">БЕРЕ УЧАСТЬ У РОБОТІ КОМІСІЇ З РОЗГЛЯДУ ВИПАДКІВ <u>БУЛІНГУ</u>, ЗДІЙСНЮЄ СОЦІАЛЬНИЙ</div>
 <div class="a bl" style="left:50px;top:262.2px">ПАТРОНАЖ СІМЕЙ, НАДАЄ КОНСУЛЬТАТИВНУ ТА КОРЕКЦІЙНУ ДОПОМОГУ.</div>
</div>

<!-- name label overlay -->
<div class="a" style="left:11px;top:650px;width:194px;height:19px;border-radius:3px;background:rgba(0,0,0,.55)"></div>
<div class="a" style="left:15px;top:654px;font-size:9.8px;line-height:12px;color:#ececec;white-space:nowrap">Балакірєва Вікторія Анатоліївна</div>
<div class="a" style="left:184px;top:659px;width:11px;height:1px;background:#eee"></div>
<div class="a" style="left:189px;top:654px;width:1px;height:11px;background:#eee"></div>
<!-- participants grid -->
<div class="a tile" style="left:1080px;top:136px;background:radial-gradient(ellipse at 80% 90%,#2d2630,#282424 70%)"></div>
<div class="a" style="left:1080px;top:136px;width:97px;height:72px;border:2px solid #7f7ff0;border-radius:5px"></div>
<div class="a tile" style="left:1180px;top:136px;background:radial-gradient(ellipse at 10% 30%,#22302f,#2a2826 70%)"></div>
<div class="a tile" style="left:1080px;top:211px;background:radial-gradient(ellipse at 30% 20%,#333232,#272526 70%)"></div>
<div class="a tile" style="left:1180px;top:211px;background:radial-gradient(ellipse at 70% 80%,#2e2426,#262324 70%)"></div>
<div class="a tile" style="left:1080px;top:286px;background:radial-gradient(ellipse at 80% 70%,#1f3030,#2a2726 70%)"></div>
<div class="a tile" style="left:1180px;top:286px;background:radial-gradient(ellipse at 90% 30%,#2e2726,#282727 70%)"></div>
<div class="a tile" style="left:1080px;top:361px;background:radial-gradient(ellipse at 20% 20%,#302828,#2a2828 70%)"></div>
<div class="a tile" style="left:1180px;top:361px;background:radial-gradient(ellipse at 90% 20%,#223333,#2a2928 70%)"></div>
<div class="a tile" style="left:1130px;top:436px;background:radial-gradient(ellipse at 90% 30%,#1f3232,#2a2827 70%)"></div>
<div class="a tile" style="left:1080px;top:511px;width:197px;height:109px;background:radial-gradient(ellipse at 10% 80%,#342d26,#2b2826 75%)"></div>
<!-- avatars -->
<div class="a av" style="left:1109px;top:151px;background:
 radial-gradient(circle 4.5px at 38% 82%,#ecd860 60%,transparent 100%),
 radial-gradient(circle 4px at 66% 76%,#e8e8dc 60%,transparent 100%),
 radial-gradient(ellipse 9px 12px at 55% 58%,#1c2650 55%,transparent 100%),
 radial-gradient(ellipse 4px 5px at 55% 32%,#7a5040 55%,transparent 100%),
 linear-gradient(180deg,transparent 0%,transparent 66%,#0e8474 76%,#0c7062 100%),
 linear-gradient(180deg,transparent 0%,transparent 33%,#3a2a22 45%,#2c201a 68%),
 linear-gradient(90deg,#d8e0c8 0%,#c8ccb0 40%,#d0c098 70%,#b8a880 100%)"></div>
<div class="a av" style="left:1208px;top:151px;background:
 radial-gradient(ellipse 9px 12px at 66% 40%,#eadfca 50%,transparent 100%),
 radial-gradient(ellipse 12px 9px at 84% 82%,#6a88c8 45%,transparent 100%),
 linear-gradient(135deg,#e8e8e0 0%,#dcd8c8 28%,transparent 42%),
 linear-gradient(60deg,#2e7a22 0%,#4e9a30 30%,#78b048 44%,#c8c0a0 56%,#d8d0bc 100%)"></div>
<div class="a av" style="left:1108px;top:227px;background:
 radial-gradient(ellipse at 35% 55%,#202020 0,#303030 18%,transparent 35%),
 radial-gradient(ellipse at 55% 75%,#d8d8d8 0,#b8b8b8 20%,transparent 40%),
 radial-gradient(ellipse at 78% 40%,#f0f0f0 0,#d0d0d0 20%,transparent 40%),
 linear-gradient(135deg,#e8e8e8 0%,#505050 35%,#8a8a8a 60%,#d0d0d0 100%)"></div>
<div class="a av" style="left:1208px;top:227px;background:
 radial-gradient(ellipse at 45% 42%,#e8c8a8 0,#d8b090 20%,transparent 32%),
 radial-gradient(ellipse at 50% 95%,#202020 0,#282828 25%,transparent 35%),
 linear-gradient(90deg,#c8a878 0%,#d8b888 30%,#b89068 60%,#708878 85%,#a06040 100%)"></div>
<div class="a av" style="left:1108px;top:302px;background:
 radial-gradient(circle at 40% 75%,#5a4038 0,transparent 25%),
 radial-gradient(circle at 65% 70%,#4a3a38 0,transparent 25%),
 radial-gradient(circle at 30% 30%,#2a2a30 0,transparent 30%),
 linear-gradient(180deg,#0a0a0c 0%,#121214 50%,#2a2222 100%)"></div>
<div class="a av" style="left:1208px;top:302px;background:#e6e1f1;color:#4d4864;font-size:15px;line-height:41px;text-align:center;letter-spacing:0.5px;-webkit-text-stroke:0.3px #4d4864">БП</div>
<div class="a av" style="left:1108px;top:377px;background:
 radial-gradient(ellipse 8px 5px at 62% 62%,#141414 55%,transparent 100%),
 radial-gradient(ellipse 5px 7px at 58% 40%,#d0a080 50%,transparent 100%),
 radial-gradient(ellipse 7px 10px at 66% 45%,#6a4030 45%,transparent 100%),
 radial-gradient(ellipse 10px 16px at 20% 60%,#5a7050 40%,transparent 100%),
 linear-gradient(180deg,#3a78d0 0%,#70a8e8 30%,#a8c8e0 48%,#8a9880 62%,#c8c8c0 85%,#909890 100%)"></div>
<div class="a" style="left:1213px;top:373px;width:30px;height:30px;border-radius:50%;box-shadow:0 0 0 1.5px #d8d0d0;background:
 radial-gradient(ellipse at 50% 75%,#a06040 0,#905030 25%,transparent 45%),
 radial-gradient(ellipse at 50% 40%,#e0b090 0,#d0a080 15%,transparent 28%),
 linear-gradient(90deg,#e8e0d8 0%,#6a3a28 30%,#5a3020 70%,#e0d8d0 100%)"></div>
<div class="a av" style="left:1158px;top:452px;background:
 radial-gradient(ellipse 14px 9px at 60% 92%,#e86a8a 50%,transparent 100%),
 radial-gradient(ellipse 7px 9px at 48% 45%,#f0c4a8 55%,transparent 100%),
 radial-gradient(ellipse 12px 15px at 45% 45%,#8a4a30 45%,transparent 100%),
 linear-gradient(120deg,#e8e8e0 0%,#90a080 40%,#a08070 60%,#e0a0b0 100%)"></div>
<div class="a" style="left:1152px;top:538px;width:54px;height:54px;border-radius:50%;background:
 radial-gradient(ellipse at 55% 100%,#101010 0,#181818 15%,transparent 22%),
 radial-gradient(ellipse at 60% 72%,#f4f4f6 0,#e8eaf0 20%,transparent 32%),
 radial-gradient(ellipse at 52% 38%,#8a6a50 0,#6a4a38 10%,transparent 16%),
 radial-gradient(ellipse at 80% 70%,#303840 0,#404850 15%,transparent 28%),
 linear-gradient(180deg,#6a98d8 0%,#b8d0ee 30%,#d8e4f0 42%,#7890a8 55%,#607890 75%,#506070 100%)"></div>
<!-- mute badges -->
<div class="a mb" style="left:1183px;top:185px"><svg width="13" height="13" viewBox="0 0 13 13" style="position:absolute;left:5px;top:3.5px"><rect x="4.3" y="1" width="4.4" height="6.5" rx="2.2" fill="#eee"/><path d="M2.5 5.8a4 4 0 0 0 8 0M6.5 9.8v2.4" fill="none" stroke="#eee" stroke-width="1.1"/><path d="M1.5 1l10 11" stroke="#161515" stroke-width="2.4"/><path d="M1.5 1l10 11" stroke="#eee" stroke-width="1.1"/></svg></div>
<div class="a mb" style="left:1083px;top:260px"><svg width="13" height="13" viewBox="0 0 13 13" style="position:absolute;left:5px;top:3.5px"><rect x="4.3" y="1" width="4.4" height="6.5" rx="2.2" fill="#eee"/><path d="M2.5 5.8a4 4 0 0 0 8 0M6.5 9.8v2.4" fill="none" stroke="#eee" stroke-width="1.1"/><path d="M1.5 1l10 11" stroke="#161515" stroke-width="2.4"/><path d="M1.5 1l10 11" stroke="#eee" stroke-width="1.1"/></svg></div>
<div class="a mb" style="left:1183px;top:260px"><svg width="13" height="13" viewBox="0 0 13 13" style="position:absolute;left:5px;top:3.5px"><rect x="4.3" y="1" width="4.4" height="6.5" rx="2.2" fill="#eee"/><path d="M2.5 5.8a4 4 0 0 0 8 0M6.5 9.8v2.4" fill="none" stroke="#eee" stroke-width="1.1"/><path d="M1.5 1l10 11" stroke="#161515" stroke-width="2.4"/><path d="M1.5 1l10 11" stroke="#eee" stroke-width="1.1"/></svg></div>
<div class="a mb" style="left:1083px;top:335px"><svg width="13" height="13" viewBox="0 0 13 13" style="position:absolute;left:5px;top:3.5px"><rect x="4.3" y="1" width="4.4" height="6.5" rx="2.2" fill="#eee"/><path d="M2.5 5.8a4 4 0 0 0 8 0M6.5 9.8v2.4" fill="none" stroke="#eee" stroke-width="1.1"/><path d="M1.5 1l10 11" stroke="#161515" stroke-width="2.4"/><path d="M1.5 1l10 11" stroke="#eee" stroke-width="1.1"/></svg></div>
<div class="a mb" style="left:1183px;top:335px"><svg width="13" height="13" viewBox="0 0 13 13" style="position:absolute;left:5px;top:3.5px"><rect x="4.3" y="1" width="4.4" height="6.5" rx="2.2" fill="#eee"/><path d="M2.5 5.8a4 4 0 0 0 8 0M6.5 9.8v2.4" fill="none" stroke="#eee" stroke-width="1.1"/><path d="M1.5 1l10 11" stroke="#161515" stroke-width="2.4"/><path d="M1.5 1l10 11" stroke="#eee" stroke-width="1.1"/></svg></div>
<div class="a mb" style="left:1083px;top:410px"><svg width="13" height="13" viewBox="0 0 13 13" style="position:absolute;left:5px;top:3.5px"><rect x="4.3" y="1" width="4.4" height="6.5" rx="2.2" fill="#eee"/><path d="M2.5 5.8a4 4 0 0 0 8 0M6.5 9.8v2.4" fill="none" stroke="#eee" stroke-width="1.1"/><path d="M1.5 1l10 11" stroke="#161515" stroke-width="2.4"/><path d="M1.5 1l10 11" stroke="#eee" stroke-width="1.1"/></svg></div>
<div class="a mb" style="left:1183px;top:410px"><svg width="13" height="13" viewBox="0 0 13 13" style="position:absolute;left:5px;top:3.5px"><rect x="4.3" y="1" width="4.4" height="6.5" rx="2.2" fill="#eee"/><path d="M2.5 5.8a4 4 0 0 0 8 0M6.5 9.8v2.4" fill="none" stroke="#eee" stroke-width="1.1"/><path d="M1.5 1l10 11" stroke="#161515" stroke-width="2.4"/><path d="M1.5 1l10 11" stroke="#eee" stroke-width="1.1"/></svg></div>
<div class="a mb" style="left:1133px;top:485px"><svg width="13" height="13" viewBox="0 0 13 13" style="position:absolute;left:5px;top:3.5px"><rect x="4.3" y="1" width="4.4" height="6.5" rx="2.2" fill="#eee"/><path d="M2.5 5.8a4 4 0 0 0 8 0M6.5 9.8v2.4" fill="none" stroke="#eee" stroke-width="1.1"/><path d="M1.5 1l10 11" stroke="#161515" stroke-width="2.4"/><path d="M1.5 1l10 11" stroke="#eee" stroke-width="1.1"/></svg></div>
<div class="a mb" style="left:1087px;top:594px"><svg width="13" height="13" viewBox="0 0 13 13" style="position:absolute;left:5px;top:3.5px"><rect x="4.3" y="1" width="4.4" height="6.5" rx="2.2" fill="#eee"/><path d="M2.5 5.8a4 4 0 0 0 8 0M6.5 9.8v2.4" fill="none" stroke="#eee" stroke-width="1.1"/><path d="M1.5 1l10 11" stroke="#161515" stroke-width="2.4"/><path d="M1.5 1l10 11" stroke="#eee" stroke-width="1.1"/></svg></div>
<div class="a" style="left:1205px;top:410px;width:2.5px;height:10px;background:#e8e8e8;box-shadow:4px 0 0 #888"></div>
<div class="a" style="left:1218px;top:409px;font-size:9.6px;line-height:12px;font-weight:700;color:#f2f2f2;white-space:nowrap">On hold</div>

<!-- taskbar content -->
<svg class="a" style="left:17px;top:688px" width="22" height="22" viewBox="0 0 22 22"><defs><linearGradient id="sg" x1="0" y1="0" x2="0" y2="1"><stop offset="0" stop-color="#fbb23a"/><stop offset="1" stop-color="#f07c1c"/></linearGradient></defs><circle cx="10" cy="9.5" r="8.5" fill="url(#sg)"/><path d="M4.5 20.5h13a3.3 3.3 0 0 0 0-6.6 4.5 4.5 0 0 0-8.6-1.2A3.9 3.9 0 0 0 4.5 20.5z" fill="#cfe0f7"/></svg>
<div class="a" style="left:42px;top:688px;font-size:10px;line-height:12px;color:#f0f0f0">7°C</div>
<div class="a" style="left:42px;top:701px;font-size:10.2px;line-height:12px;color:#c8c8c8;white-space:nowrap">Partly sunny</div>
<!-- windows logo -->
<div class="a" style="left:501px;top:690px;width:9.5px;height:9.5px;background:linear-gradient(135deg,#6fd6ff,#2aa2f0);border-radius:1px 0 0 0"></div>
<div class="a" style="left:511.5px;top:690px;width:9.5px;height:9.5px;background:linear-gradient(135deg,#5ccdfc,#1f95e8);border-radius:0 1px 0 0"></div>
<div class="a" style="left:501px;top:700.5px;width:9.5px;height:9.5px;background:linear-gradient(135deg,#4ec3fa,#1a8be0);border-radius:0 0 0 1px"></div>
<div class="a" style="left:511.5px;top:700.5px;width:9.5px;height:9.5px;background:linear-gradient(135deg,#40b8f6,#147fd6);border-radius:0 0 1px 0"></div>
<!-- search -->
<svg class="a" style="left:539px;top:689px" width="21" height="21" viewBox="0 0 21 21"><circle cx="8.5" cy="8.5" r="6.5" fill="#3a3038" stroke="#f0f0f0" stroke-width="2"/><path d="M13.5 13.5l5.5 5.5" stroke="#f0f0f0" stroke-width="2.4" stroke-linecap="round"/></svg>
<!-- task view -->
<div class="a" style="left:576px;top:695px;width:13px;height:13px;background:#7a7a7a;border-radius:1px"></div>
<div class="a" style="left:582px;top:690px;width:14px;height:13px;background:#d8d8d8;border-radius:1px;box-shadow:-1px 1px 0 #555"></div>
<!-- explorer -->
<div class="a" style="left:612px;top:691px;width:20px;height:18px;background:#f4c542;border-radius:1px"></div>
<div class="a" style="left:612px;top:690px;width:9px;height:3px;background:#e8b030;border-radius:1px 1px 0 0"></div>
<div class="a" style="left:612px;top:695px;width:20px;height:14px;background:#fcd760;border-radius:1px"></div>
<div class="a" style="left:618px;top:703px;width:10px;height:6px;background:#2a7ad8"></div>
<!-- chrome -->
<div class="a" style="left:649px;top:690px;width:20px;height:20px;border-radius:50%;background:conic-gradient(from -60deg,#e04434 0deg 120deg,#f6c12b 120deg 240deg,#33a852 240deg 360deg)"></div>
<div class="a" style="left:654px;top:695px;width:10px;height:10px;border-radius:50%;background:#fff"></div>
<div class="a" style="left:656px;top:697px;width:6px;height:6px;border-radius:50%;background:#3a7ee8"></div>
<div class="a" style="left:655px;top:712px;width:8px;height:3px;border-radius:2px;background:#9a9a9a"></div>
<!-- telegram -->
<div class="a" style="left:686px;top:690px;width:20px;height:20px;border-radius:50%;background:linear-gradient(180deg,#38b0e3,#1e96d4)"></div>
<svg class="a" style="left:689px;top:695px" width="14" height="11" viewBox="0 0 14 11"><path d="M1 5l11-4-2 9-3.5-2.5L5 9V6.5l6-5-7.5 4.5z" fill="#fff"/></svg>
<div class="a" style="left:697px;top:688px;width:13px;height:8px;border-radius:3px;background:#e94848;font-size:7px;line-height:8px;color:#fff;text-align:center">45</div>
<div class="a" style="left:692px;top:712px;width:8px;height:3px;border-radius:2px;background:#9a9a9a"></div>
<!-- pdf -->
<div class="a" style="left:722px;top:689px;width:21px;height:21px;background:linear-gradient(135deg,#d01c1c,#a80c10)"></div>
<svg class="a" style="left:722px;top:689px" width="21" height="21" viewBox="0 0 21 21"><path d="M8 1l10 17M18 1L12 11" stroke="#fff" stroke-width="1.8"/><text x="3" y="13" font-size="5" fill="#fff" font-family="Liberation Sans">PDF</text></svg>
<div class="a" style="left:729px;top:712px;width:8px;height:3px;border-radius:2px;background:#9a9a9a"></div>
<!-- teams (active) -->
<div class="a" style="left:752px;top:683px;width:33px;height:32px;border-radius:4px;background:rgba(255,255,255,.07)"></div>
<svg class="a" style="left:757px;top:688px" width="24" height="22" viewBox="0 0 24 22"><circle cx="17" cy="5" r="3" fill="#7b83eb"/><rect x="13" y="9" width="9" height="10" rx="3" fill="#7b83eb"/><circle cx="10" cy="4" r="3.5" fill="#6a70d8"/><rect x="5" y="8" width="12" height="13" rx="2.5" fill="#5b5fc7"/><rect x="1" y="8" width="10" height="10" rx="1.2" fill="#4b53bc"/><path d="M3.5 10.5h5M6 10.5v5.5" stroke="#fff" stroke-width="1.3"/></svg>
<div class="a" style="left:769px;top:686px;width:13px;height:13px;border-radius:50%;background:#e8334a"></div>
<div class="a" style="left:762px;top:712px;width:14px;height:3px;border-radius:2px;background:#c9a8f0"></div>
<!-- tray -->
<svg class="a" style="left:1061px;top:696px" width="11" height="7" viewBox="0 0 11 7"><path d="M1 6l4.5-4.5L10 6" fill="none" stroke="#eee" stroke-width="1.4"/></svg>
<div class="a" style="left:1080px;top:683px;width:27px;height:33px;border-radius:4px;background:rgba(255,255,255,.07)"></div>
<svg class="a" style="left:1086px;top:691px" width="15" height="16" viewBox="0 0 15 16"><rect x="5" y="1" width="5" height="9" rx="2.5" fill="#eee"/><path d="M3 7.5a4.5 4.5 0 0 0 9 0M7.5 12v3" fill="none" stroke="#eee" stroke-width="1.2"/><path d="M1.5 1.5l12 13" stroke="#3a1818" stroke-width="2.5"/><path d="M1.5 1.5l12 13" stroke="#eee" stroke-width="1.2"/></svg>
<div class="a" style="left:1116px;top:694px;font-size:9.5px;line-height:11px;color:#eee">РУС</div>
<svg class="a" style="left:1149px;top:693px" width="15" height="12" viewBox="0 0 15 12"><path d="M1 4.5a9 9 0 0 1 13 0M3 6.8a6 6 0 0 1 9 0M5 9a3 3 0 0 1 5 0" fill="none" stroke="#eee" stroke-width="1.3"/><circle cx="7.5" cy="10.8" r="1" fill="#eee"/></svg>
<svg class="a" style="left:1169px;top:693px" width="15" height="13" viewBox="0 0 15 13"><path d="M1 4.5h3l4-3.5v11l-4-3.5H1z" fill="none" stroke="#eee" stroke-width="1.2"/><path d="M10 4a3.5 3.5 0 0 1 0 5M12 2a6.5 6.5 0 0 1 0 9" fill="none" stroke="#eee" stroke-width="1.2"/></svg>
<div class="a" style="left:1189px;top:695px;width:14px;height:9px;border:1.3px solid #eee;border-radius:2px"></div>
<div class="a" style="left:1191px;top:697px;width:9px;height:5px;background:#eee"></div>
<div class="a" style="left:1203px;top:698px;width:2px;height:3px;background:#eee"></div>
<div class="a" style="left:1217px;top:687px;width:47px;font-size:9.6px;line-height:12px;color:#f0f0f0;text-align:right">13:32</div>
<div class="a" style="left:1210px;top:700px;width:54px;font-size:9.6px;line-height:12px;color:#f0f0f0;text-align:right">26.02.2026</div>

</body></html>
